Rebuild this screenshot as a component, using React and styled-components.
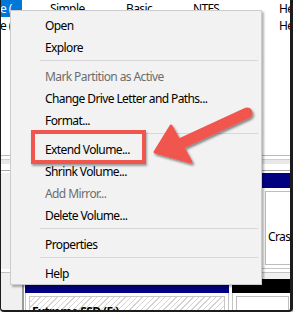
import React from "react";
import styled, { createGlobalStyle } from "styled-components";

const GlobalStyle = createGlobalStyle`
  html, body {
    margin: 0;
    padding: 0;
    background: #ffffff;
  }
`;

const UI_FONT = `"Noto Sans", "Open Sans", "Liberation Sans", sans-serif`;

const Frame = styled.div`
  position: relative;
  width: 293px;
  height: 312px;
  overflow: hidden;
  background: #ffffff;
  font-family: ${UI_FONT};
  font-size: 12px;
  letter-spacing: -0.6px;
  color: #000;
  display: flex;
  flex-direction: column;

  &::after {
    content: "";
    position: absolute;
    inset: 0;
    border: solid #1c1c1c;
    border-width: 0 3px 2px 1px;
    border-radius: 0 0 4px 4px;
    pointer-events: none;
    z-index: 10;
  }
`;

/* ---- volume list (top pane) ---- */

const ListPanel = styled.div`
  height: 155px;
  flex: none;
  border-bottom: 1px solid #b9b9b9;
`;

const ListRow = styled.div`
  display: flex;
  height: 17px;
  line-height: 17px;
  white-space: nowrap;
`;

const ListCell = styled.div`
  flex: none;
  width: ${({ $w }) => $w}px;
  overflow: hidden;
`;

const SelectedText = styled.span`
  display: inline-block;
  width: 22px;
  background: #0078d7;
  color: #ffffff;
`;

const Splitter = styled.div`
  height: 14px;
  flex: none;
  background: linear-gradient(
    #ffffff 0 3px,
    #cfcfcf 3px 4px,
    #e8e8e8 4px 8px,
    #ffffff 8px
  );
  border-bottom: 1px solid #a8a8a8;
`;

/* ---- graphical disk view (bottom pane) ---- */

const GraphPanel = styled.div`
  flex: 1;
  display: flex;
  flex-direction: column;
  padding-top: 2px;
  background: #ffffff;
`;

const DiskRow = styled.div`
  display: flex;
  flex: none;
  height: ${({ $h }) => $h}px;
`;

const DiskLabel = styled.div`
  width: 22px;
  flex: none;
  background: #f0f0f0;
  border-right: 2px solid #9a9a9a;
  margin-right: 1px;
`;

const Partition = styled.div`
  width: ${({ $w }) => $w}px;
  flex: none;
  display: flex;
  flex-direction: column;
  margin-left: ${({ $gap }) => $gap || 0}px;
`;

const PartHead = styled.div`
  height: ${({ $h }) => $h}px;
  flex: none;
  background: ${({ $color }) => $color};
`;

const PartBody = styled.div`
  flex: 1;
  padding: 3px;
  border: 1px solid #c4c4c4;
  border-top: none;
  background: #ffffff;
`;

const PartInner = styled.div`
  height: 100%;
  box-sizing: border-box;
  padding: ${({ $top }) => $top || 3}px 2px 0;
  border: 1px solid ${({ $hatched }) => ($hatched ? "#c8c8c8" : "#bdbdbd")};
  background: ${({ $hatched }) =>
    $hatched
      ? "repeating-linear-gradient(135deg, #ffffff 0 3px, #d4d4d4 3px 4px)"
      : "#ffffff"};
  font-weight: ${({ $bold }) => ($bold ? 700 : 400)};
  white-space: nowrap;
  overflow: hidden;
`;

const DiskGap = styled.div`
  height: 10px;
  flex: none;
  background: linear-gradient(#ffffff 0 3px, #c2c2c2 3px 4px, #f0f0f0 4px);
`;

/* ---- context menu + annotations (overlays) ---- */

const Menu = styled.div`
  position: absolute;
  left: 10px;
  top: 10px;
  width: 252px;
  box-sizing: border-box;
  padding: 3px 0 0;
  background: #f2f2f2;
  border: 1px solid #cccccc;
  box-shadow: 2px 2px 2px rgba(0, 0, 0, 0.3);
  display: flex;
  flex-direction: column;
  z-index: 2;
`;

const MenuItem = styled.div`
  height: 22px;
  box-sizing: border-box;
  padding: 2px 0 0 34px;
  line-height: 20px;
  color: ${({ $disabled }) => ($disabled ? "#6d6d6d" : "#000000")};
  white-space: nowrap;
`;

const MenuSeparator = styled.div`
  height: 1px;
  margin: 2px 3px 4px 29px;
  background: #d7d7d7;
`;

const Highlight = styled.div`
  position: absolute;
  left: 31px;
  top: 130px;
  width: 115px;
  height: 34px;
  box-sizing: border-box;
  border: 4px solid #f0564d;
  box-shadow: 1px 2px 2px rgba(0, 0, 0, 0.35);
  z-index: 3;
`;

const ArrowLayer = styled.svg`
  position: absolute;
  left: 0;
  top: 0;
  width: 293px;
  height: 312px;
  pointer-events: none;
  z-index: 4;
`;

const MENU = [
  { label: "Open" },
  { label: "Explore" },
  { sep: true },
  { label: "Mark Partition as Active", disabled: true },
  { label: "Change Drive Letter and Paths..." },
  { label: "Format..." },
  { sep: true },
  { label: "Extend Volume..." },
  { label: "Shrink Volume..." },
  { label: "Add Mirror...", disabled: true },
  { label: "Delete Volume..." },
  { sep: true },
  { label: "Properties" },
  { sep: true },
  { label: "Help" },
];

const COLS = [50, 76, 67, 86, 40];

const VOLUMES = [
  { cells: ["e (", "Simple", "Basic", "NTFS", "Healthy (Boot)"], selected: true },
  { cells: ["e (", "Simple", "Basic", "NTFS", "Healthy (Primary)"] },
];

function Arrow() {
  return (
    <ArrowLayer viewBox="0 0 293 312">
      <defs>
        <filter id="arrowShadow" x="-20%" y="-20%" width="140%" height="140%">
          <feDropShadow dx="1.5" dy="2" stdDeviation="1.2" floodColor="#000" floodOpacity="0.45" />
        </filter>
      </defs>
      <g filter="url(#arrowShadow)" fill="#f0564d" stroke="#f0564d">
        <line x1="247" y1="113" x2="182" y2="143" strokeWidth="11" strokeLinecap="round" />
        <polygon points="155,152 171,126 191,162" strokeWidth="3" strokeLinejoin="round" />
      </g>
    </ArrowLayer>
  );
}

export default function App() {
  return (
    <>
      <GlobalStyle />
      <Frame>
        <ListPanel>
          {VOLUMES.map((v, i) => (
            <ListRow key={i}>
              {v.cells.map((c, j) => (
                <ListCell key={j} $w={COLS[j]}>
                  {j === 0 && v.selected ? <SelectedText>{c}</SelectedText> : c}
                </ListCell>
              ))}
            </ListRow>
          ))}
        </ListPanel>
        <Splitter />
        <GraphPanel>
          <DiskRow $h={96}>
            <DiskLabel />
            <Partition $w={233}>
              <PartHead $h={15} $color="#000080" />
              <PartBody>
                <PartInner>Data (C:)</PartInner>
              </PartBody>
            </Partition>
            <Partition $w={34} $gap={3}>
              <PartHead $h={15} $color="#000080" />
              <PartBody>
                <PartInner $top={36}>CrashPlan (D:)</PartInner>
              </PartBody>
            </Partition>
          </DiskRow>
          <DiskGap />
          <DiskRow $h={40}>
            <DiskLabel />
            <Partition $w={204}>
              <PartHead $h={14} $color="#000080" />
              <PartBody>
                <PartInner $hatched $bold $top={6}>Extreme SSD (F:)</PartInner>
              </PartBody>
            </Partition>
            <Partition $w={61} $gap={3}>
              <PartHead $h={14} $color="#000000" />
              <PartBody>
                <PartInner />
              </PartBody>
            </Partition>
          </DiskRow>
        </GraphPanel>

        <Menu>
          {MENU.map((m, i) =>
            m.sep ? (
              <MenuSeparator key={i} />
            ) : (
              <MenuItem key={i} $disabled={m.disabled}>
                {m.label}
              </MenuItem>
            )
          )}
        </Menu>
        <Highlight />
        <Arrow />
      </Frame>
    </>
  );
}
